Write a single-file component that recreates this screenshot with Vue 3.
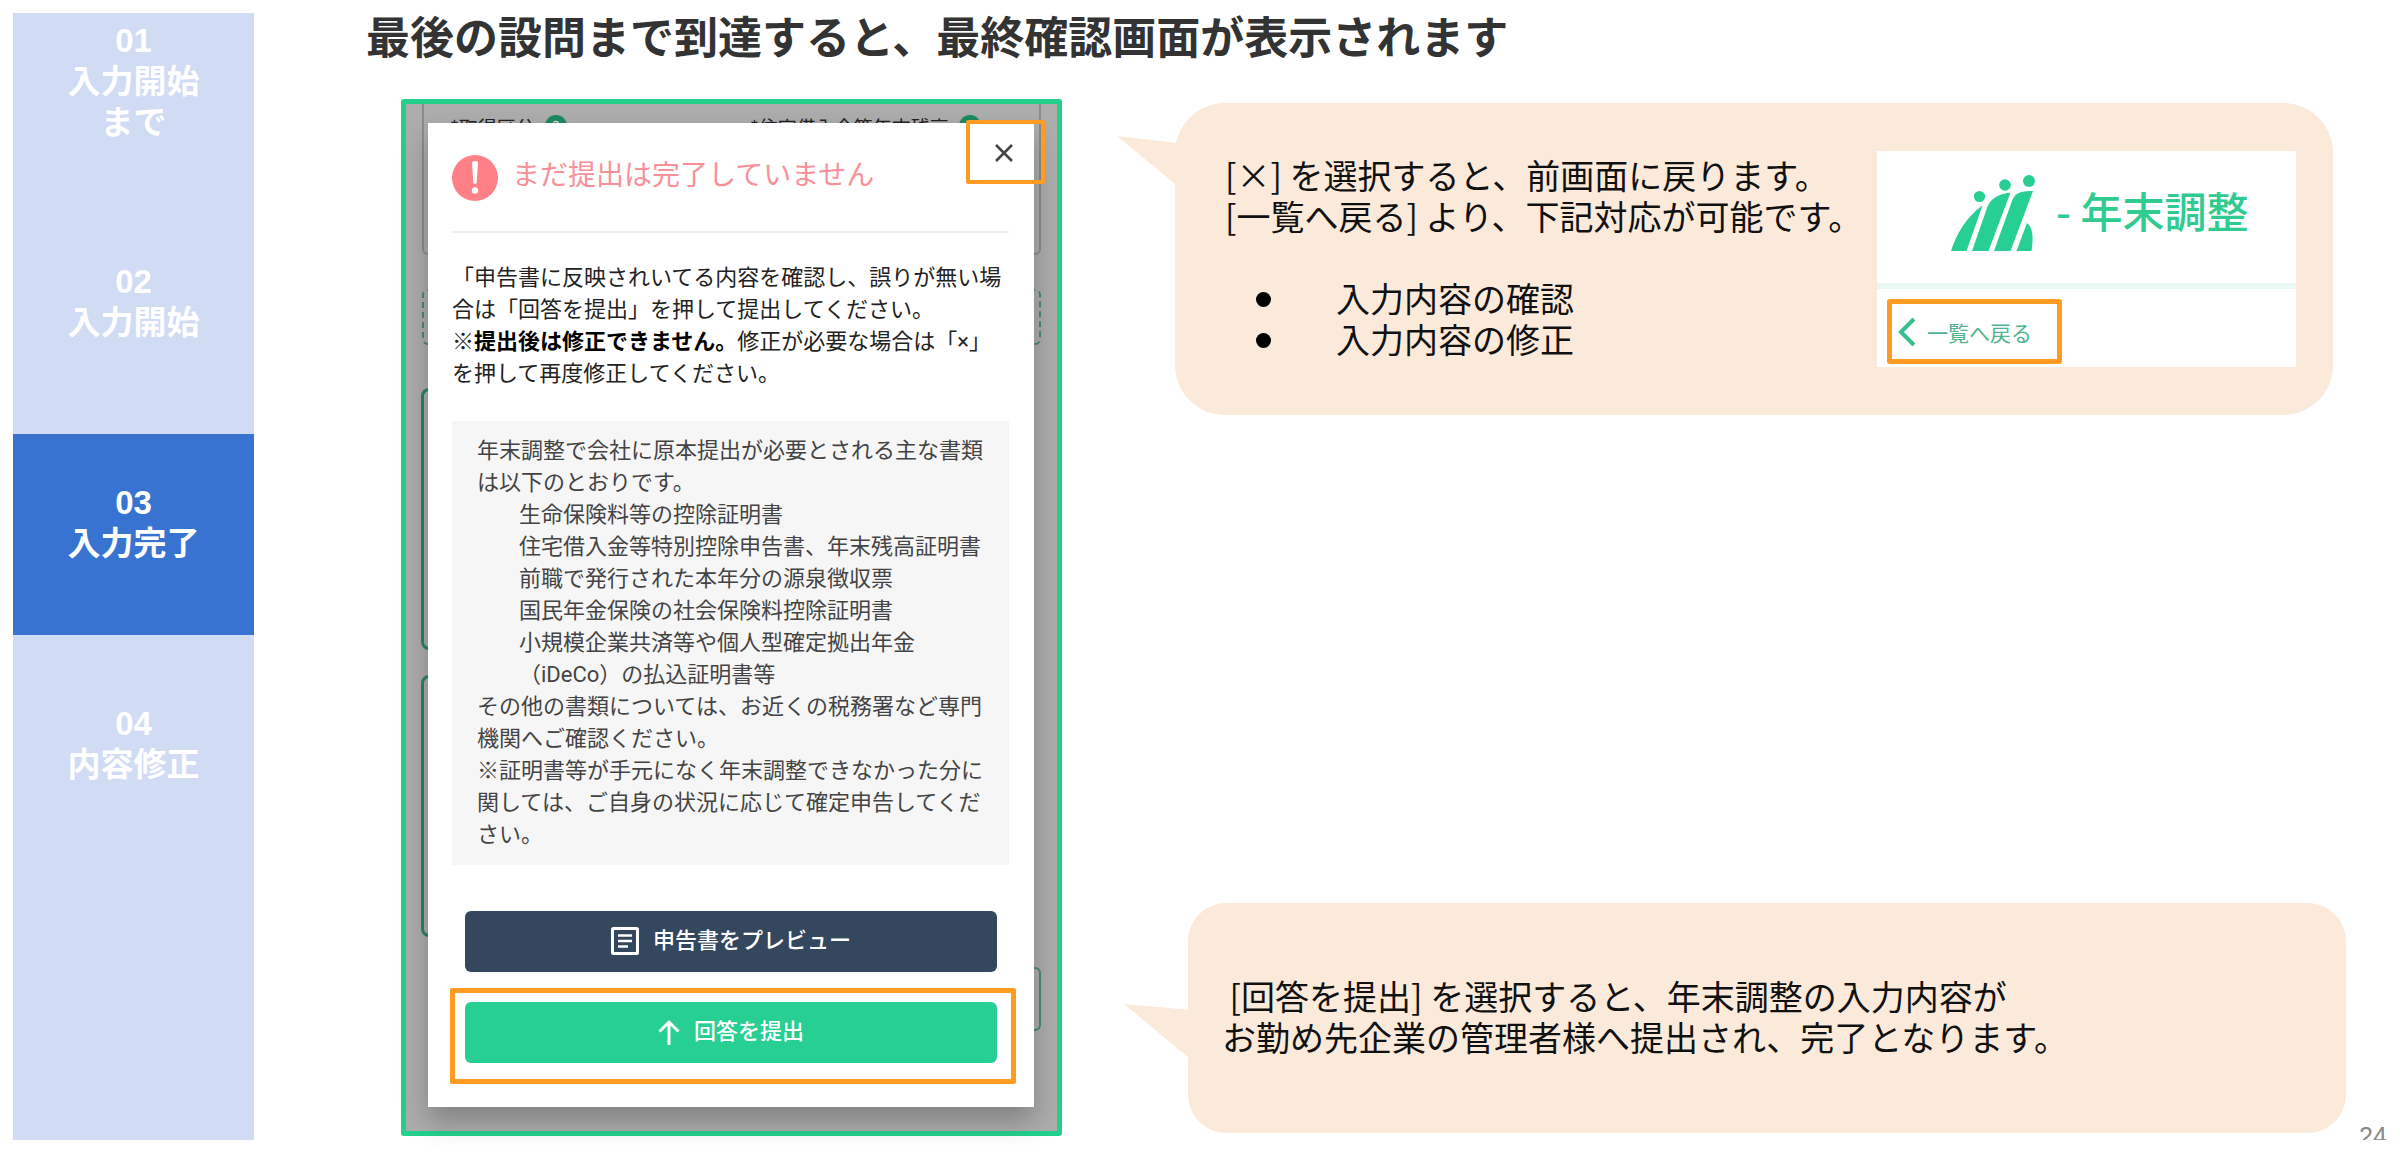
<template>
  <div class="slide">
    <nav class="steps">
      <div v-for="step in steps" :key="step.no" class="step" :class="{ active: step.active }">
        <span>{{ step.no }}</span>
        <span v-for="line in step.lines" :key="line">{{ line }}</span>
      </div>
    </nav>

    <main class="main">
      <h1>最後の設問まで到達すると、最終確認画面が表示されます</h1>

      <div class="content">
        <section class="phone">
          <!-- form behind the dialog -->
          <div class="backdrop">
            <div class="back-card plain">
              <span class="back-label">*取得区分 <i class="help">?</i></span>
              <span class="back-label">*住宅借入金等年末残高 <i class="help">?</i></span>
            </div>
            <div class="back-card dashed"></div>
            <div class="back-card green"></div>
            <div class="back-card green last"></div>
            <div class="back-card small"></div>
          </div>

          <div class="modal">
            <button class="close" type="button" aria-label="閉じる">
              <svg width="20" height="20" viewBox="0 0 20 20">
                <path d="M2 2 L18 18 M18 2 L2 18" stroke="#444" stroke-width="2.6" fill="none" />
              </svg>
            </button>

            <header class="modal-head">
              <svg width="46" height="46" viewBox="0 0 46 46">
                <circle cx="23" cy="23" r="23" fill="#ff8086" />
                <path d="M20 8 Q20 6 23 6 Q26 6 26 8 L24.6 28 Q23 30 21.4 28 Z" fill="#fff" />
                <circle cx="23" cy="35.5" r="3.2" fill="#fff" />
              </svg>
              <h2>まだ提出は完了していません</h2>
            </header>

            <p class="lead">
              「申告書に反映されいてる内容を確認し、誤りが無い場合は「回答を提出」を押して提出してください。<br>※<strong>提出後は修正できません。</strong>修正が必要な場合は「×」を押して再度修正してください。
            </p>

            <div class="notes">
              <p>年末調整で会社に原本提出が必要とされる主な書類は以下のとおりです。</p>
              <ul>
                <li v-for="doc in documents" :key="doc">{{ doc }}</li>
              </ul>
              <p>その他の書類については、お近くの税務署など専門機関へご確認ください。</p>
              <p>※証明書等が手元になく年末調整できなかった分に関しては、ご自身の状況に応じて確定申告してください。</p>
            </div>

            <div class="actions">
              <button class="btn preview" type="button">
                <svg width="28" height="28" viewBox="0 0 28 28" fill="none" stroke="#fff">
                  <rect x="1.5" y="1.5" width="25" height="25" rx="1" stroke-width="3" />
                  <path d="M7 8.5 H21 M7 14 H21 M7 19.5 H17" stroke-width="2.6" />
                </svg>
                申告書をプレビュー
              </button>
              <div class="submit-wrap">
                <button class="btn submit" type="button">
                  <svg width="22" height="26" viewBox="0 0 22 26" fill="none" stroke="#fff" stroke-width="3">
                    <path d="M11 26 V3 M1.5 12.5 L11 3 L20.5 12.5" />
                  </svg>
                  回答を提出
                </button>
                <span class="marker"></span>
              </div>
            </div>
          </div>
        </section>

        <section class="callouts">
          <div class="callout first">
            <svg class="tail" width="60" height="50" viewBox="0 0 60 50">
              <path d="M0 0 L60 7 V50 L58 48 Z" fill="#fbe9da" />
            </svg>
            <div class="callout-text">
              <p>[×] を選択すると、前画面に戻ります。</p>
              <p>[一覧へ戻る] より、下記対応が可能です。</p>
              <ul>
                <li>入力内容の確認</li>
                <li>入力内容の修正</li>
              </ul>
            </div>
            <div class="app-shot">
              <div class="app-head">
                <svg width="84" height="76" viewBox="0 0 84 76" fill="#28cf92">
                  <circle cx="28.5" cy="21.5" r="5.6" />
                  <circle cx="54" cy="10" r="5.8" />
                  <circle cx="78" cy="6" r="6" />
                  <path d="M31.5 30.5 L15.5 76 H0 C5 60 15 42 31.5 30.5 Z" />
                  <path d="M59.5 17.5 L37.5 76 H21 L36 33 C39 24 47 19 59.5 17.5 Z" />
                  <path d="M82 16 L59.5 76 H43 L61 26 C64 18 69 16 82 16 Z" />
                  <path d="M76 48 C81 52 83 60 80.5 76 H65.5 Z" />
                </svg>
                <span>- 年末調整</span>
              </div>
              <button class="back" type="button">
                <svg width="18" height="30" viewBox="0 0 18 30">
                  <path d="M16 2 L3 15 L16 28" fill="none" stroke="#35c08c" stroke-width="4" />
                </svg>
                一覧へ戻る
              </button>
            </div>
          </div>

          <div class="callout second">
            <svg class="tail" width="66" height="54" viewBox="0 0 66 54">
              <path d="M0 0 L66 6 V54 L64 53 Z" fill="#fbe9da" />
            </svg>
            <div class="callout-text">
              <p>&nbsp;[回答を提出] を選択すると、年末調整の入力内容が</p>
              <p>お勤め先企業の管理者様へ提出され、完了となります。</p>
            </div>
          </div>
        </section>

        <div class="page-no">24</div>
      </div>
    </main>
  </div>
</template>

<script setup>
const steps = [
  { no: '01', lines: ['入力開始', 'まで'], active: false },
  { no: '02', lines: ['入力開始'], active: false },
  { no: '03', lines: ['入力完了'], active: true },
  { no: '04', lines: ['内容修正'], active: false },
];

const documents = [
  '生命保険料等の控除証明書',
  '住宅借入金等特別控除申告書、年末残高証明書',
  '前職で発行された本年分の源泉徴収票',
  '国民年金保険の社会保険料控除証明書',
  '小規模企業共済等や個人型確定拠出年金（iDeCo）の払込証明書等',
];
</script>

<style>
body {
  background: #fff;
}
</style>

<style scoped>
* {
  box-sizing: border-box;
}

h1, h2, p, ul {
  margin: 0;
  padding: 0;
}

ul {
  list-style: none;
}

button {
  font-family: inherit;
  cursor: pointer;
}

svg {
  display: block;
  flex-shrink: 0;
}

.slide {
  display: grid;
  grid-template-columns: 241px minmax(0, 1fr);
  min-height: 100vh;
  padding: 13px;
  font-family: "Noto Sans CJK JP", sans-serif;
  text-spacing-trim: space-all;
}

/* left navigation */
.steps {
  display: grid;
  grid-template-rows: 210px 211px 201px 1fr;
  background: #d0dcf4;
}

.step {
  display: flex;
  flex-direction: column;
  align-items: center;
  padding-top: 38px;
  color: #fff;
  font-family: "Liberation Sans", "Noto Sans CJK JP", sans-serif;
  font-size: 33px;
  font-weight: 700;
  line-height: 41px;
}

.step:first-child {
  padding-top: 7px;
}

.step.active {
  padding-top: 48px;
  background: #3973d2;
}

.step:last-child {
  padding-top: 68px;
}

.main {
  display: flex;
  flex-direction: column;
  padding-left: 112px;
}

h1 {
  color: #333;
  font-size: 44px;
  font-weight: 700;
  line-height: 44px;
  white-space: nowrap;
}

.content {
  flex: 1;
  display: flex;
  margin-top: 42px;
  padding-left: 35px;
}

/* phone screen */
.phone {
  position: relative;
  align-self: flex-start;
  flex: 0 0 661px;
  padding: 19px 23px 24px 22px;
  border: 5px solid #22d08c;
  border-radius: 3px;
  background: #adadad;
}

.backdrop {
  position: absolute;
  inset: 0;
  display: flex;
  flex-direction: column;
  padding: 0 16px;
  overflow: hidden;
}

.back-card {
  flex-shrink: 0;
}

.plain {
  display: grid;
  grid-template-columns: 300px 1fr;
  height: 151px;
  padding: 11px 0 0 26px;
  border: 2px solid #8c8c8c;
  border-top: none;
  border-radius: 0 0 6px 6px;
}

.back-label {
  display: flex;
  align-items: flex-start;
  color: #222;
  font-size: 19px;
  line-height: 24px;
}

.help {
  width: 22px;
  height: 22px;
  margin-left: 10px;
  border-radius: 50%;
  background: #1d8a60;
  color: #ddd;
  font-size: 16px;
  font-style: normal;
  line-height: 22px;
  text-align: center;
}

.dashed {
  height: 56px;
  margin-top: 34px;
  border: 2px dashed #4e8a72;
  border-radius: 6px;
}

.green {
  height: 262px;
  margin: 43px 12px 0 -1px;
  border: 3px solid #2b8562;
  border-radius: 8px;
}

.green.last {
  margin-top: 25px;
}

.small {
  height: 64px;
  margin: 30px 0 0 100px;
  border: 2px solid #4e8a72;
  border-radius: 6px;
}

.modal {
  position: relative;
  padding: 32px 25px 44px 24px;
  background: #fff;
  box-shadow: 0 14px 26px rgba(0, 0, 0, 0.25);
  font-family: Roboto, "Noto Sans CJK JP", sans-serif;
}

.close {
  position: absolute;
  top: -3px;
  right: -11px;
  display: flex;
  align-items: center;
  justify-content: center;
  width: 79px;
  height: 64px;
  padding: 2px 4px 0 0;
  border: 4px solid #ff9a22;
  border-radius: 2px;
  background: transparent;
}

.modal-head {
  display: flex;
  align-items: center;
  gap: 14px;
  padding-bottom: 30px;
  border-bottom: 2px solid #eee;
}

h2 {
  padding-bottom: 4px;
  color: #f8909a;
  font-size: 28px;
  font-weight: 400;
  line-height: 36px;
}

.lead {
  margin-top: 29px;
  color: #222;
  font-size: 22px;
  line-height: 32px;
}

.lead strong {
  color: #000;
  font-weight: 700;
}

.notes {
  margin-top: 31px;
  padding: 14px 24px 14px 25px;
  background: #f6f6f6;
  color: #444;
  font-size: 22px;
  line-height: 32px;
}

.notes ul {
  padding-left: 42px;
}

.actions {
  display: flex;
  flex-direction: column;
  gap: 30px;
  margin-top: 46px;
  padding: 0 12px 0 13px;
}

.btn {
  display: flex;
  align-items: center;
  justify-content: center;
  gap: 14px;
  width: 100%;
  height: 61px;
  padding: 0 0 2px;
  border: none;
  border-radius: 6px;
  color: #fff;
  font-size: 22px;
  font-weight: 500;
  line-height: 32px;
}

.preview {
  background: #33475e;
}

.submit {
  background: #28cf92;
}

.submit-wrap {
  position: relative;
}

.marker {
  position: absolute;
  inset: -14px -19px -21px -15px;
  border: 5px solid #ff9a22;
  border-radius: 2px;
  pointer-events: none;
}

/* speech bubbles */
.callouts {
  flex: 1;
  display: flex;
  flex-direction: column;
  justify-content: space-between;
  padding: 4px 0 7px 113px;
}

.callout {
  position: relative;
  display: flex;
  align-items: center;
  background: #fbe9da;
}

.first {
  justify-content: space-between;
  margin-right: 13px;
  padding: 48px 37px 48px 50px;
  border-radius: 50px;
}

.second {
  min-height: 230px;
  margin-left: 13px;
  padding: 0 34px;
  border-radius: 38px;
}

.tail {
  position: absolute;
  top: 33px;
  left: -58px;
}

.second .tail {
  top: 101px;
  left: -64px;
}

.callout-text {
  padding-bottom: 5px;
  color: #111;
  font-size: 34px;
  line-height: 41px;
  white-space: nowrap;
}

.callout-text ul {
  margin-top: 41px;
}

.callout-text li {
  display: flex;
  align-items: center;
  gap: 65px;
  padding-left: 31px;
}

.callout-text li::before {
  content: "";
  width: 15px;
  height: 15px;
  margin-top: 4px;
  border-radius: 50%;
  background: #000;
}

.app-shot {
  flex: 0 0 419px;
  height: 216px;
  background: #fff;
}

.app-head {
  display: flex;
  align-items: center;
  gap: 21px;
  height: 138px;
  padding: 0 0 8px 74px;
  border-bottom: 6px solid #e9f8f3;
  color: #30cb90;
  font-size: 42px;
  font-weight: 500;
  line-height: 60px;
}

.app-head span {
  padding-bottom: 6px;
}

.back {
  display: flex;
  align-items: center;
  gap: 11px;
  width: 175px;
  height: 65px;
  margin: 10px 0 0 10px;
  padding: 0 0 0 6px;
  border: 5px solid #ff9a22;
  border-radius: 3px;
  background: #fff;
  color: #4fb58f;
  font-size: 21px;
  line-height: 30px;
  white-space: nowrap;
}

.page-no {
  flex: 0 0 41px;
  align-self: flex-end;
  height: 13px;
  padding-left: 13px;
  overflow: hidden;
  color: #888;
  font-family: "Liberation Sans", sans-serif;
  font-size: 25px;
  line-height: 19px;
}
</style>
